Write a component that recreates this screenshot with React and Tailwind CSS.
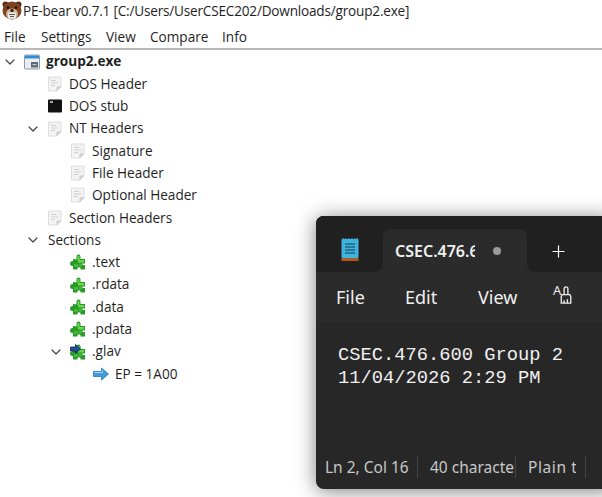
import { ChevronDown, Plus } from "lucide-react";

const menus = [
  ["File", "w-[37px]"],
  ["Settings", "w-[65px]"],
  ["View", "w-[44px]"],
  ["Compare", "w-[72px]"],
  ["Info", "w-[30px]"],
];

const depthClass = ["pl-0", "pl-[23px]", "pl-[46px]", "pl-[69px]"];

const tree = [
  { label: "group2.exe", depth: 0, open: true, icon: "exe", bold: true },
  { label: "DOS Header", depth: 1, icon: "doc" },
  { label: "DOS stub", depth: 1, icon: "term" },
  { label: "NT Headers", depth: 1, open: true, icon: "doc" },
  { label: "Signature", depth: 2, icon: "doc" },
  { label: "File Header", depth: 2, icon: "doc" },
  { label: "Optional Header", depth: 2, icon: "doc" },
  { label: "Section Headers", depth: 1, icon: "doc" },
  { label: "Sections", depth: 0, open: true, nudge: true },
  { label: ".text", depth: 2, icon: "puzzle" },
  { label: ".rdata", depth: 2, icon: "puzzle" },
  { label: ".data", depth: 2, icon: "puzzle" },
  { label: ".pdata", depth: 2, icon: "puzzle" },
  { label: ".glav", depth: 2, open: true, icon: "entry" },
  { label: "EP = 1A00", depth: 3, icon: "arrow" },
];

const DocIcon = () => (
  <svg width="16" height="16" viewBox="0 0 16 16">
    <path d="M1.500 1h12.500v10l-4 4H1.500z" fill="#f3f3f3" stroke="#dedede" />
    <path d="M4 4.500h5M4 7h7M4 9.500h4" stroke="#cfcfcf" />
    <path d="M10 15v-4h4" fill="#d8d8d8" stroke="#c8c8c8" />
  </svg>
);

const TermIcon = () => (
  <svg width="16" height="16" viewBox="0 0 16 16">
    <rect x="1" y="1.500" width="14" height="13" rx="1" fill="#111" />
    <path d="M3 4h3" stroke="#ddd" strokeWidth="1.500" />
  </svg>
);

const ExeIcon = () => (
  <svg width="16" height="16" viewBox="0 0 16 16">
    <rect x="0.500" y="1" width="15" height="14" rx="1" fill="#e8eef3" stroke="#8d9aa6" />
    <rect x="1" y="1.500" width="14" height="3" fill="#2f8fd0" />
    <rect x="7" y="8" width="7" height="5.500" fill="#5b6670" />
    <path d="M8.500 10.700h4" stroke="#e5e5e5" />
  </svg>
);

const PuzzleIcon = () => (
  <svg width="16" height="16" viewBox="0 0 16 16">
    <path d="M3 5h3.500V2.500a2 2 0 0 1 4 0V5H15v4.500h-2.500v1.500H15v4.500h-4.500v-1.500a2 2 0 0 0-3 0v1.500H3z" fill="#2a9a2a" />
    <circle cx="2.500" cy="9.500" r="2.500" fill="#2a9a2a" />
    <path d="M7.500 2h2v4H14v2.500H8V6H4V5.500h3.500z" fill="#6ad64c" />
    <path d="M4 10h4v3H4zM9 9.500h3v3H9z" fill="#45b936" />
  </svg>
);

const ArrowIcon = () => (
  <svg width="16" height="16" viewBox="0 0 16 16">
    <path d="M0.500 5.500h8V2l7 6-7 6v-3.500h-8z" fill="#3f9bdc" stroke="#2a78b5" strokeWidth="0.800" />
    <path d="M1.500 6.500h8V4.500" fill="none" stroke="#a5d6f5" />
  </svg>
);

const EntryIcon = () => (
  <span className="relative block w-4 h-4">
    <PuzzleIcon />
    <svg className="absolute left-0 top-0" width="11" height="10" viewBox="0 0 11 10">
      <path d="M0.500 3h5V0.500L10.500 5l-5 4.500V7h-5z" fill="#1f4f96" stroke="#10254a" strokeWidth="0.800" />
    </svg>
  </span>
);

const icons = {
  doc: <DocIcon />,
  term: <TermIcon />,
  exe: <ExeIcon />,
  puzzle: <PuzzleIcon />,
  entry: <EntryIcon />,
  arrow: <ArrowIcon />,
};

const BearLogo = () => (
  <svg width="20" height="20" viewBox="0 0 20 20">
    <circle cx="3.500" cy="3.500" r="3" fill="#5f2c12" />
    <circle cx="16.500" cy="3.500" r="3" fill="#5f2c12" />
    <ellipse cx="10" cy="9.500" rx="9.500" ry="9" fill="#7f4220" />
    <circle cx="6" cy="6.500" r="1.300" fill="#1c1008" />
    <circle cx="14" cy="6.500" r="1.300" fill="#1c1008" />
    <ellipse cx="10" cy="13" rx="6" ry="5.500" fill="#cdb49b" />
    <rect x="6" y="11.500" width="8" height="6" rx="1" fill="#f1ece6" />
    <path d="M7 13.500h6M8 15.500h4" stroke="#555" />
    <circle cx="10" cy="9.500" r="1.600" fill="#22130a" />
  </svg>
);

const NotepadIcon = () => (
  <svg width="18" height="24" viewBox="0 0 18 24">
    <rect x="0.500" y="1" width="17" height="19" rx="1" fill="#3fb3dc" />
    <path d="M2 1V0M5 1V0M8 1V0M11 1V0M14 1V0M16.500 1V0" stroke="#2b93bf" strokeWidth="1.200" />
    <path d="M4 6h10M4 9h10M4 12h10M4 15h10" stroke="#0f3f58" strokeWidth="1.200" />
    <rect x="0.500" y="20" width="17" height="3" rx="0.500" fill="#b25a24" />
  </svg>
);

const FontBrushIcon = () => (
  <span className="flex items-start w-[21px] h-[24px] -mt-[4px]">
    <span className="text-[13px] leading-[14px] text-[#ededed]">A</span>
    <svg className="mt-[3px] -ml-px" width="12" height="19" viewBox="0 0 12 20" fill="none" stroke="#ededed" strokeWidth="1.400">
      <path d="M4 9V3a2 2 0 0 1 4 0v6M2 9h8l1 2v7H1v-7zM4 18v-3M7.500 18v-4" />
    </svg>
  </span>
);

const App = () => {
  return (
    <div className="relative w-[602px] h-[497px] overflow-hidden bg-white text-[#1f1f1f] font-['Open_Sans',sans-serif] text-[13.6px]">
      <header className="flex items-center h-[22px] pl-[2px] gap-[1px]">
        <BearLogo />
        <span className="whitespace-nowrap tracking-[-0.2px]">PE-bear v0.7.1 [C:/Users/UserCSEC202/Downloads/group2.exe]</span>
      </header>

      <nav className="flex h-[26px] mt-[2px] pl-[4px] pt-[3px] items-center border-b-2 border-[#b9b9b9]">
        {menus.map(([name, width]) => (
          <span key={name} className={width}>{name}</span>
        ))}
      </nav>

      <ul className="pt-[0.5px]">
        {tree.map((row) => (
          <li
            key={row.label}
            className={`flex items-center h-[22.3px] whitespace-nowrap ${row.nudge ? "pl-[23px]" : depthClass[row.depth]} ${row.bold ? "font-bold" : ""}`}
          >
            <span className="flex justify-center w-[20px] shrink-0">
              {row.open && <ChevronDown size={16} strokeWidth={1.800} className="text-[#444]" />}
            </span>
            {row.icon ? (
              <span className="ml-[4px] mr-[6px] w-4 h-4 shrink-0">{icons[row.icon]}</span>
            ) : (
              <span className="w-[5px]" />
            )}
            <span>{row.label}</span>
          </li>
        ))}
      </ul>

      {/* notepad window floating over the tree */}
      <section className="absolute left-[316px] top-[216px] w-[300px] h-[273px] flex flex-col rounded-[8px] bg-[#272727] text-[#f0f0f0] shadow-[0_2px_20px_rgba(0,0,0,0.5)] overflow-hidden font-['Noto_Sans',sans-serif]">
        <div className="flex h-[56px] shrink-0 bg-[#2b2b2b]">
          <div className="flex w-[67px] justify-center pl-[1px] pt-[22px] bg-[#202020] rounded-br-[8px]">
            <NotepadIcon />
          </div>
          <div className="flex w-[144px] bg-[#202020] pt-[13px]">
            <div className="flex flex-1 items-center rounded-t-[8px] bg-[#2b2b2b] pl-[12px]">
              <span className="w-[80px] overflow-hidden whitespace-nowrap text-[16px] font-semibold">CSEC.476.600 Group 2</span>
              <span className="ml-[18px] w-2 h-2 rounded-full bg-[#9a9a9a]" />
            </div>
          </div>
          <div className="relative flex flex-1 pl-[22px] pt-[26px] bg-[#202020] rounded-bl-[8px]">
            <Plus size={19} strokeWidth={1.500} className="text-white" />
            <span className="absolute left-[81px] top-[20px] w-[12px] h-px bg-[#cfcfcf]" />
          </div>
        </div>

        <div className="flex items-center h-[50px] shrink-0 bg-[#2b2b2b] pl-[20px] text-[18px]">
          <span className="w-[69px]">File</span>
          <span className="w-[73px]">Edit</span>
          <span className="w-[75px]">View</span>
          <FontBrushIcon />
        </div>

        <div className="flex-1 pl-[22px] pt-[22px] font-['Liberation_Mono',monospace] text-[18.750px] leading-[23px]">
          <p>CSEC.476.600 Group 2</p>
          <p>11/04/2026 2:29 PM</p>
        </div>

        <footer className="flex items-center h-[43px] shrink-0 pb-[1px] text-[15.500px] text-[#c8c8c8]">
          <span className="w-[102px] pl-[9px] h-[22px] leading-[22px] whitespace-nowrap border-r border-[#444]">Ln 2, Col 16</span>
          <span className="w-[98px] pl-[12px] h-[22px] leading-[22px] overflow-hidden whitespace-nowrap border-r border-[#444]">40 characters</span>
          <span className="w-[70px] pl-[12px] h-[22px] leading-[22px] border-r border-[#444]">
            <span className="block w-[48px] overflow-hidden whitespace-nowrap tracking-[0.6px]">Plain text</span>
          </span>
        </footer>
      </section>
    </div>
  );
};

export default App;
